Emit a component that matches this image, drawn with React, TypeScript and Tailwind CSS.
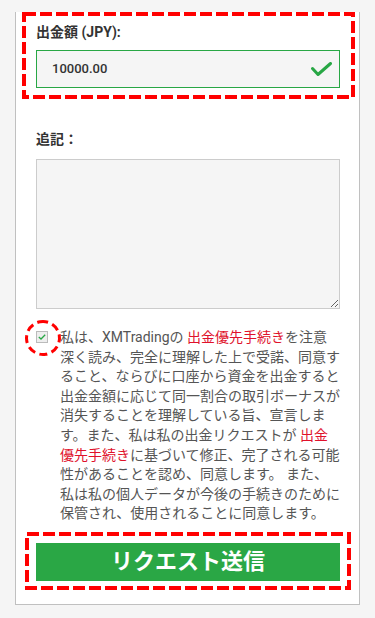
import React from "react";

const font = { fontFamily: "Roboto, 'Noto Sans CJK JP', sans-serif" };

function DashedBox({ className, children }: { className: string; children: React.ReactNode }) {
  return (
    <div className={"relative " + className}>
      <svg className="absolute inset-0 w-full h-full pointer-events-none" preserveAspectRatio="none">
        <rect x="2" y="2" width="calc(100% - 4px)" height="calc(100% - 4px)" fill="none" stroke="#ff0000" strokeWidth="4" strokeDasharray="12 4" />
      </svg>
      {children}
    </div>
  );
}

export default function App() {
  const red = "text-[#e0112b]";
  return (
    <div className="w-[375px] h-[618px] bg-[#f5f5f5] overflow-hidden" style={font}>
      <div className="ml-[15px] w-[345px] bg-white border-x border-b border-[#c0c0c0] pb-[14px]">
        <DashedBox className="mt-[12px] ml-[6px] w-[333px] h-[87px] pt-[10px] pl-[14px] pr-[15px]">
          <div className="text-[14px] leading-[21px] font-bold text-[#333]">出金額 (JPY):</div>
          <div className="mt-[7px] h-[38px] border border-[#28a745] bg-[#f5f5f5] flex items-center justify-between pl-[15px] pr-[7px]">
            <span className="text-[13px] font-medium text-[#333]">10000.00</span>
            <svg width="21" height="15" viewBox="0 0 21 15">
              <path d="M1.5 6.5 L7 12.5 L19.5 1.5" fill="none" stroke="#28a745" strokeWidth="3" strokeLinecap="round" strokeLinejoin="round" />
            </svg>
          </div>
        </DashedBox>

        <div className="ml-[20px] w-[304px]">
          <div className="mt-[30px] text-[14px] leading-[21px] font-bold text-[#333]">追記：</div>
          <textarea className="mt-[9px] block w-[304px] h-[150px] bg-[#f5f5f5] border border-[#cccccc] outline-none" />
        </div>

        <div className="relative ml-[20px] mt-[19px] flex items-start">
          <svg className="absolute left-[-12px] top-[-9px]" width="38" height="38" viewBox="0 0 38 38">
            <circle cx="19" cy="19" r="16.5" fill="none" stroke="#ff0000" strokeWidth="3" strokeDasharray="8 4.5" transform="rotate(-100 19 19)" />
          </svg>
          <div className="mt-[3px] w-[12px] h-[12px] border border-[#bbbbbb] bg-[#eeeeee] flex items-center justify-center shrink-0">
            <svg width="8" height="6" viewBox="0 0 8 6">
              <path d="M0.8 3 L3 5 L7.2 0.8" fill="none" stroke="#28a745" strokeWidth="1.3" />
            </svg>
          </div>
          <p className="ml-[12px] w-[285px] text-[14px] leading-[19.6px] text-[#555] whitespace-nowrap">
            私は、XMTradingの <span className={red}>出金優先手続き</span>を注意<br />
            深く読み、完全に理解した上で受諾、同意す<br />
            ること、ならびに口座から資金を出金すると<br />
            出金金額に応じて同一割合の取引ボーナスが<br />
            消失することを理解している旨、宣言しま<br />
            す。また、私は私の出金リクエストが <span className={red}>出金</span><br />
            <span className={red}>優先手続き</span>に基づいて修正、完了される可能<br />
            性があることを認め、同意します。 また、<br />
            私は私の個人データが今後の手続きのために<br />
            保管され、使用されることに同意します。
          </p>
        </div>

        <DashedBox className="mt-[8px] ml-[9px] w-[326px] h-[58px] pt-[11px] pl-[11px] pr-[11px]">
          <button className="w-[304px] h-[38px] bg-[#2aa745] text-white text-[22px] font-bold flex items-center justify-center">
            リクエスト送信
          </button>
        </DashedBox>
      </div>
    </div>
  );
}
